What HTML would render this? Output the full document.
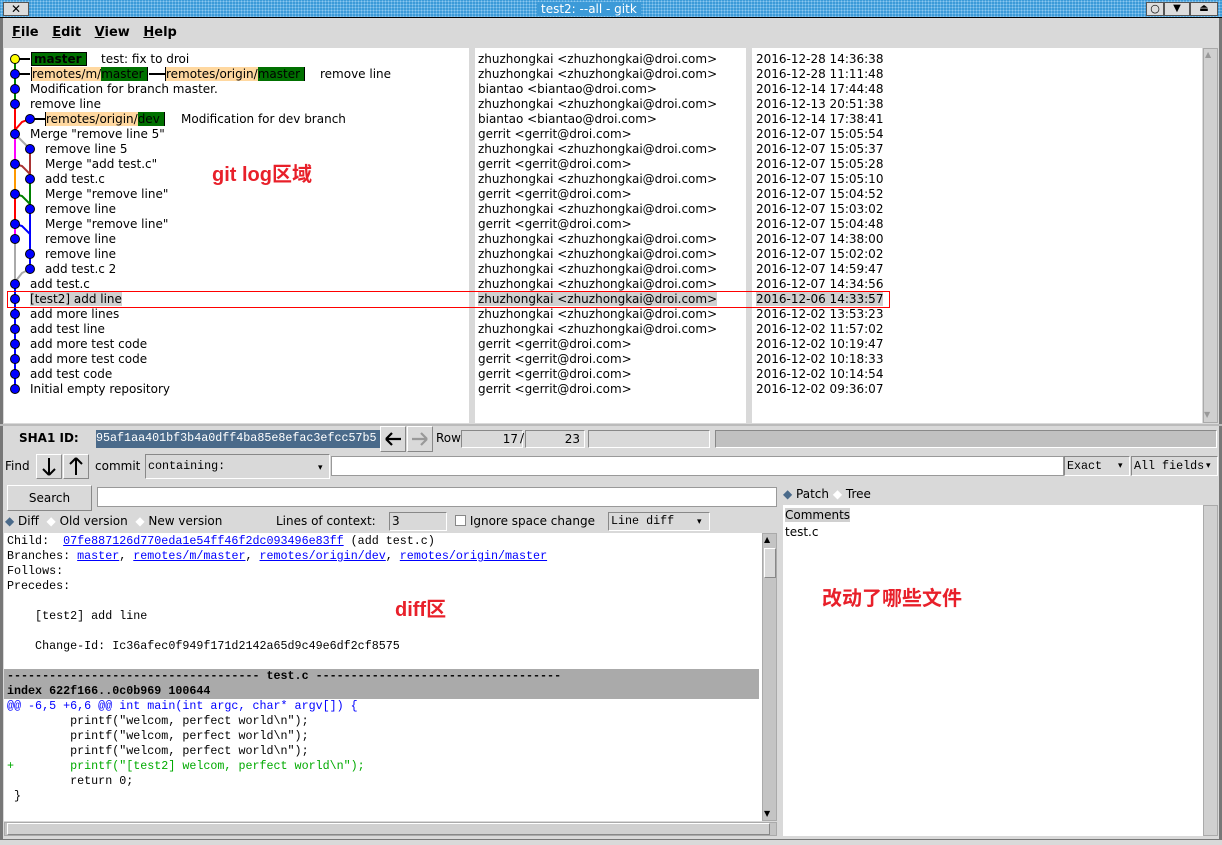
<!DOCTYPE html>
<html><head><meta charset="utf-8"><style>
*{margin:0;padding:0;box-sizing:border-box}
body{width:1222px;height:845px;background:#d9d9d9;position:relative;overflow:hidden;font-family:"DejaVu Sans","Liberation Sans",sans-serif;font-size:12px;color:#000}
.a{position:absolute;white-space:pre}
.w{position:absolute;background:#fff}
.m{font-family:"Liberation Mono","DejaVu Sans Mono",monospace;font-size:11.7px}
.sb{position:absolute;background:#c4c4c4;border:1px solid #aaa}
.btn{position:absolute;background:#d9d9d9;border:1px solid #fff;border-right-color:#888;border-bottom-color:#888}
.ent{position:absolute;background:#d9d9d9;border:1px solid #888;border-right-color:#fff;border-bottom-color:#fff}
.og{background:#ffd8a0}.gr{background:#007000}
a{color:#00f;text-decoration:underline}
.i{padding-left:15px}
.a.msg{white-space:normal}
.msg div{height:15px;white-space:nowrap}
</style></head><body>
<div class="a" style="left:0;top:0;width:1222px;height:18px;background:#3c9ad8;background-image:radial-gradient(#8cc8f0 1px,transparent 1px);background-size:3px 3px;border-bottom:1px solid #000"></div>
<div class="a" style="left:3px;top:2px;width:26px;height:14px;background:#ddd;border:1px solid #555;text-align:center;font-size:12px;line-height:12px;font-weight:bold">✕</div>
<div class="a" style="left:537px;top:2px;height:14px;background:#3c9ad8;color:#fff;font-size:12px;line-height:14px;padding:0 4px">test2: --all - gitk</div>
<div class="a" style="left:1146px;top:2px;width:18px;height:14px;background:#ddd;border:1px solid #555;text-align:center;font-size:11px;line-height:12px">○</div>
<div class="a" style="left:1164px;top:2px;width:26px;height:14px;background:#ddd;border:1px solid #555;text-align:center;font-size:10px;line-height:12px">▼</div>
<div class="a" style="left:1190px;top:2px;width:28px;height:14px;background:#ddd;border:1px solid #555;text-align:center;font-size:10px;line-height:12px">⏏</div>
<div class="a" style="left:0;top:18px;width:3px;height:827px;background:#777"></div>
<div class="a" style="left:1219px;top:18px;width:3px;height:827px;background:#777"></div>
<div class="a" style="left:12px;top:25px;font-size:13px;font-weight:bold"><u>F</u>ile&nbsp;&nbsp; <u>E</u>dit&nbsp;&nbsp; <u>V</u>iew&nbsp;&nbsp; <u>H</u>elp</div>
<div class="w" style="left:4px;top:48px;width:465px;height:375px"></div>
<div class="w" style="left:475px;top:48px;width:271px;height:375px"></div>
<div class="w" style="left:752px;top:48px;width:450px;height:375px"></div>
<div class="sb" style="left:1203px;top:48px;width:15px;height:375px;background:#d0d0d0"></div>
<div class="a" style="left:1205px;top:50px;font-size:8px;color:#999">▲</div>
<div class="a" style="left:1204px;top:410px;font-size:8px;color:#999">▼</div>
<svg class="a" style="left:0;top:0" width="470" height="420">
<g stroke-width="2" fill="none">
<line x1="15" y1="59" x2="30" y2="59" stroke="#000"/>
<line x1="15" y1="74" x2="30" y2="74" stroke="#000"/>
<line x1="149" y1="74" x2="165" y2="74" stroke="#000"/>
<line x1="30" y1="119" x2="45" y2="119" stroke="#000"/>
<line x1="15" y1="59" x2="15" y2="104" stroke="#008000"/>
<line x1="15" y1="104" x2="15" y2="134" stroke="#f00"/>
<polyline points="30,119 22,122 15,130" stroke="#f00"/>
<line x1="15" y1="134" x2="15" y2="164" stroke="#f0f"/>
<line x1="15" y1="164" x2="15" y2="194" stroke="#f90"/>
<line x1="15" y1="194" x2="15" y2="224" stroke="#f00"/>
<line x1="15" y1="224" x2="15" y2="239" stroke="#f0f"/>
<line x1="15" y1="239" x2="15" y2="284" stroke="#aaa"/>
<line x1="15" y1="284" x2="15" y2="389" stroke="#00f"/>
<polyline points="15,134 30,149" stroke="#aaa"/>
<polyline points="15,164 22,166 30,174 30,179" stroke="#a33"/>
<line x1="30" y1="149" x2="30" y2="179" stroke="#a33"/>
<line x1="30" y1="179" x2="30" y2="209" stroke="#008000"/>
<polyline points="15,194 22,196 30,204" stroke="#008000"/>
<line x1="30" y1="209" x2="30" y2="269" stroke="#00f"/>
<polyline points="15,224 22,226 30,234" stroke="#00f"/>
<polyline points="30,269 22,273 15,282" stroke="#aaa"/>
</g>
<g fill="#00f" stroke="#000" stroke-width="1">
<circle cx="15" cy="59" r="4.5" fill="#ff0"/>
<circle cx="15" cy="74" r="4.5"/><circle cx="15" cy="89" r="4.5"/><circle cx="15" cy="104" r="4.5"/>
<circle cx="30" cy="119" r="4.5"/><circle cx="15" cy="134" r="4.5"/><circle cx="30" cy="149" r="4.5"/>
<circle cx="15" cy="164" r="4.5"/><circle cx="30" cy="179" r="4.5"/><circle cx="15" cy="194" r="4.5"/>
<circle cx="30" cy="209" r="4.5"/><circle cx="15" cy="224" r="4.5"/><circle cx="15" cy="239" r="4.5"/>
<circle cx="30" cy="254" r="4.5"/><circle cx="30" cy="269" r="4.5"/><circle cx="15" cy="284" r="4.5"/>
<circle cx="15" cy="299" r="4.5"/><circle cx="15" cy="314" r="4.5"/><circle cx="15" cy="329" r="4.5"/>
<circle cx="15" cy="344" r="4.5"/><circle cx="15" cy="359" r="4.5"/><circle cx="15" cy="374" r="4.5"/>
<circle cx="15" cy="389" r="4.5"/>
</g></svg>
<div class="a" style="left:31px;top:52px;width:56px;height:14px;border:1px solid #000;background:#007000;font-weight:bold;line-height:12px;padding-left:2px">master</div>
<div class="a" style="left:31px;top:67px;height:14px;border:1px solid #000;line-height:12px"><span class="og">remotes/m/</span><span class="gr">master </span></div>
<div class="a" style="left:165px;top:67px;height:14px;border:1px solid #000;line-height:12px"><span class="og">remotes/origin/</span><span class="gr">master </span></div>
<div class="a" style="left:45px;top:112px;height:14px;border:1px solid #000;line-height:12px"><span class="og">remotes/origin/</span><span class="gr">dev </span></div>
<div class="a" style="left:101px;top:52px">test: fix to droi</div>
<div class="a" style="left:320px;top:67px">remove line</div>
<div class="a" style="left:181px;top:112px">Modification for dev branch</div>
<div class="a msg" style="left:30px;top:82px;line-height:15px"><div>Modification for branch master.</div><div>remove line</div></div>
<div class="a msg" style="left:30px;top:127px;line-height:15px"><div>Merge "remove line 5"</div><div class="i">remove line 5</div><div class="i">Merge "add test.c"</div><div class="i">add test.c</div><div class="i">Merge "remove line"</div><div class="i">remove line</div><div class="i">Merge "remove line"</div><div class="i">remove line</div><div class="i">remove line</div><div class="i">add test.c 2</div><div>add test.c</div><div><span style="background:#d0d0d0">[test2] add line</span></div><div>add more lines</div><div>add test line</div><div>add more test code</div><div>add more test code</div><div>add test code</div><div>Initial empty repository</div></div>
<div class="a" style="left:478px;top:52px;line-height:15px">zhuzhongkai &lt;zhuzhongkai@droi.com&gt;
zhuzhongkai &lt;zhuzhongkai@droi.com&gt;
biantao &lt;biantao@droi.com&gt;
zhuzhongkai &lt;zhuzhongkai@droi.com&gt;
biantao &lt;biantao@droi.com&gt;
gerrit &lt;gerrit@droi.com&gt;
zhuzhongkai &lt;zhuzhongkai@droi.com&gt;
gerrit &lt;gerrit@droi.com&gt;
zhuzhongkai &lt;zhuzhongkai@droi.com&gt;
gerrit &lt;gerrit@droi.com&gt;
zhuzhongkai &lt;zhuzhongkai@droi.com&gt;
gerrit &lt;gerrit@droi.com&gt;
zhuzhongkai &lt;zhuzhongkai@droi.com&gt;
zhuzhongkai &lt;zhuzhongkai@droi.com&gt;
zhuzhongkai &lt;zhuzhongkai@droi.com&gt;
zhuzhongkai &lt;zhuzhongkai@droi.com&gt;
<span style="background:#d0d0d0">zhuzhongkai &lt;zhuzhongkai@droi.com&gt;</span>
zhuzhongkai &lt;zhuzhongkai@droi.com&gt;
zhuzhongkai &lt;zhuzhongkai@droi.com&gt;
gerrit &lt;gerrit@droi.com&gt;
gerrit &lt;gerrit@droi.com&gt;
gerrit &lt;gerrit@droi.com&gt;
gerrit &lt;gerrit@droi.com&gt;</div>
<div class="a" style="left:756px;top:52px;line-height:15px">2016-12-28 14:36:38
2016-12-28 11:11:48
2016-12-14 17:44:48
2016-12-13 20:51:38
2016-12-14 17:38:41
2016-12-07 15:05:54
2016-12-07 15:05:37
2016-12-07 15:05:28
2016-12-07 15:05:10
2016-12-07 15:04:52
2016-12-07 15:03:02
2016-12-07 15:04:48
2016-12-07 14:38:00
2016-12-07 15:02:02
2016-12-07 14:59:47
2016-12-07 14:34:56
<span style="background:#d0d0d0">2016-12-06 14:33:57</span>
2016-12-02 13:53:23
2016-12-02 11:57:02
2016-12-02 10:19:47
2016-12-02 10:18:33
2016-12-02 10:14:54
2016-12-02 09:36:07</div>
<div class="a" style="left:7px;top:291px;width:883px;height:17px;border:1.5px solid #f00"></div>
<div class="a" style="left:212px;top:158px;color:#e8202a;font-size:20px;font-weight:bold;font-family:'Liberation Sans','Noto Sans CJK SC',sans-serif">git log区域</div>
<div class="a" style="left:0;top:424px;width:1222px;height:2px;background:#bbb"></div>
<div class="a" style="left:19px;top:431px;font-weight:bold">SHA1 ID:</div>
<div class="a m" style="left:96px;top:430px;width:284px;height:18px;background:#4a6a8a;color:#fff;line-height:17px;overflow:hidden">95af1aa401bf3b4a0dff4ba85e8efac3efcc57b5</div>
<div class="btn" style="left:380px;top:426px;width:26px;height:26px"><svg width="24" height="24"><path d="M5 12H20M5 12L11 6M5 12L11 18" stroke="#000" stroke-width="2.2" fill="none"/></svg></div>
<div class="btn" style="left:407px;top:426px;width:26px;height:26px"><svg width="24" height="24"><path d="M4 12H19M19 12L13 6M19 12L13 18" stroke="#999" stroke-width="2.2" fill="none"/></svg></div>
<div class="a" style="left:436px;top:431px">Row</div>
<div class="ent" style="left:461px;top:430px;width:62px;height:18px;text-align:right;padding-right:4px;line-height:16px">17</div>
<div class="a" style="left:520px;top:431px">/</div>
<div class="ent" style="left:525px;top:430px;width:60px;height:18px;text-align:right;padding-right:4px;line-height:16px">23</div>
<div class="ent" style="left:588px;top:430px;width:122px;height:18px"></div>
<div class="ent" style="left:715px;top:430px;width:502px;height:18px;background:#c0c0c0"></div>
<div class="a" style="left:5px;top:459px">Find</div>
<div class="btn" style="left:36px;top:454px;width:26px;height:25px"><svg width="24" height="23"><path d="M12 3V20M12 20L6 14M12 20L18 14" stroke="#000" stroke-width="2" fill="none"/></svg></div>
<div class="btn" style="left:63px;top:454px;width:26px;height:25px"><svg width="24" height="23"><path d="M12 20V3M12 3L6 9M12 3L18 9" stroke="#000" stroke-width="2" fill="none"/></svg></div>
<div class="a" style="left:95px;top:459px">commit</div>
<div class="ent m" style="left:145px;top:454px;width:185px;height:25px;line-height:22px;padding-left:2px">containing:</div>
<div class="a" style="left:318px;top:463px;font-size:9px">▾</div>
<div class="w" style="left:331px;top:456px;width:733px;height:20px;border:1px solid #999"></div>
<div class="ent m" style="left:1064px;top:456px;width:66px;height:20px;line-height:18px;padding-left:2px">Exact</div>
<div class="a" style="left:1118px;top:461px;font-size:9px">▾</div>
<div class="ent m" style="left:1131px;top:456px;width:87px;height:20px;line-height:18px;padding-left:2px">All fields</div>
<div class="a" style="left:1206px;top:461px;font-size:9px">▾</div>
<div class="btn" style="left:7px;top:485px;width:85px;height:26px;text-align:center;line-height:24px">Search</div>
<div class="w" style="left:97px;top:487px;width:680px;height:20px;border:1px solid #999"></div>
<div class="a" style="left:783px;top:487px"><span style="color:#4a6a8a">◆</span> Patch <span style="color:#fff">◆</span> Tree</div>
<div class="a" style="left:5px;top:514px"><span style="color:#4a6a8a">◆</span> Diff&nbsp; <span style="color:#fff">◆</span> Old version&nbsp; <span style="color:#fff">◆</span> New version</div>
<div class="a" style="left:276px;top:514px">Lines of context:</div>
<div class="ent" style="left:389px;top:512px;width:58px;height:19px;line-height:17px;padding-left:2px;background:#d9d9d9">3</div>
<div class="a" style="left:455px;top:514px"><span style="display:inline-block;width:11px;height:11px;border:1px solid #888;background:#fff;vertical-align:-1px"></span> Ignore space change</div>
<div class="ent m" style="left:608px;top:512px;width:102px;height:19px;line-height:17px;padding-left:2px">Line diff</div>
<div class="a" style="left:697px;top:517px;font-size:9px">▾</div>
<div class="w" style="left:4px;top:533px;width:758px;height:288px"></div>
<div class="sb" style="left:762px;top:533px;width:15px;height:288px"></div>
<div class="a" style="left:764px;top:535px;font-size:8px">▲</div>
<div class="a" style="left:764px;top:548px;width:12px;height:30px;background:#d9d9d9;border:1px solid #fff;border-right-color:#888;border-bottom-color:#888"></div>
<div class="a" style="left:764px;top:809px;font-size:8px">▼</div>
<div class="sb" style="left:4px;top:822px;width:773px;height:14px"></div>
<div class="a" style="left:7px;top:823px;width:763px;height:12px;border:1px solid #fff;border-right-color:#888;border-bottom-color:#888;background:#d0d0d0"></div>
<div class="a" style="left:4px;top:669px;width:755px;height:30px;background:#aaa"></div>
<div class="a m" style="left:7px;top:534px;line-height:15px">Child:  <a>07fe887126d770eda1e54ff46f2dc093496e83ff</a> (add test.c)
Branches: <a>master</a>, <a>remotes/m/master</a>, <a>remotes/origin/dev</a>, <a>remotes/origin/master</a>
Follows:
Precedes:

    [test2] add line

    Change-Id: Ic36afec0f949f171d2142a65d9c49e6df2cf8575

<b>------------------------------------ test.c -----------------------------------</b>
<b>index 622f166..0c0b969 100644</b>
<span style="color:#00f">@@ -6,5 +6,6 @@ int main(int argc, char* argv[]) {</span>
         printf("welcom, perfect world\n");
         printf("welcom, perfect world\n");
         printf("welcom, perfect world\n");
<span style="color:#0a0">+        printf("[test2] welcom, perfect world\n");</span>
         return 0;
 }</div>
<div class="a" style="left:395px;top:593px;color:#e8202a;font-size:20px;font-weight:bold;font-family:'Liberation Sans','Noto Sans CJK SC',sans-serif">diff区</div>
<div class="w" style="left:783px;top:505px;width:420px;height:331px"></div>
<div class="sb" style="left:1203px;top:505px;width:15px;height:331px;background:#d0d0d0"></div>
<div class="a" style="left:785px;top:508px;background:#d0d0d0">Comments</div>
<div class="a" style="left:785px;top:525px">test.c</div>
<div class="a" style="left:822px;top:582px;color:#e8202a;font-size:20px;font-weight:bold;font-family:'Liberation Sans','Noto Sans CJK SC',sans-serif">改动了哪些文件</div>
<div class="a" style="left:0;top:839px;width:1222px;height:6px;background:#d9d9d9;border-top:1px solid #777"></div>
</body></html>
